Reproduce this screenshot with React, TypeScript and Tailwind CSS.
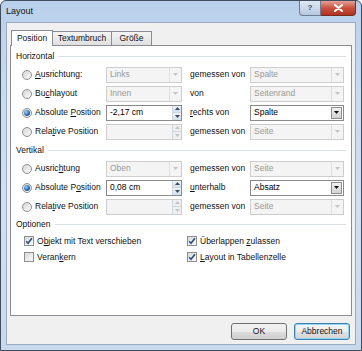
import React from "react";

function Acc({ text, at }: { text: string; at?: number }) {
  if (at === undefined) return <>{text}</>;
  return (
    <>
      {text.slice(0, at)}
      <span className="underline underline-offset-1">{text[at]}</span>
      {text.slice(at + 1)}
    </>
  );
}

const Tri = ({ color, up }: { color: string; up?: boolean }) => (
  <svg width="5" height="3" viewBox="0 0 5 3">
    <path d={up ? "M0 3h5L2.5 0z" : "M0 0h5L2.5 3z"} fill={color} />
  </svg>
);

const Radio = ({ on }: { on?: boolean }) => (
  <span className="w-[10px] h-[10px] rounded-full border border-[#8e8f8f] bg-gradient-to-br from-[#d6d6d6] to-[#fbfbfb] flex items-center justify-center shrink-0">
    {on && (
      <span className="w-[6px] h-[6px] rounded-full bg-[radial-gradient(circle_at_35%_35%,#9fd0f4,#1f62ad_60%,#0b3875)]" />
    )}
  </span>
);

const Check = ({ on }: { on?: boolean }) => (
  <span className="w-[10px] h-[10px] border border-[#8e8f8f] bg-gradient-to-br from-[#dadada] to-[#fafafa] flex items-center justify-center shrink-0">
    {on && (
      <svg width="8" height="8" viewBox="0 0 8 8">
        <path d="M1.2 4.2 3.1 6.3 6.9 1.2" stroke="#2f4f86" strokeWidth="1.6" fill="none" />
      </svg>
    )}
  </span>
);

function Combo({ value, disabled, wide }: { value: string; disabled?: boolean; wide?: boolean }) {
  return (
    <div
      className={
        (wide ? "w-[94px] " : "w-[76px] ") +
        (disabled
          ? "border-[#cdcdcd] bg-[#f4f4f4] text-[#999999] "
          : "border-[#8a8a8a] bg-white text-black ") +
        "h-[16px] border flex items-center shrink-0"
      }
    >
      <span className="flex-1 pl-[3px] leading-none">{value}</span>
      {disabled ? (
        <span className="w-[12px] h-full border-l border-[#dedede] flex items-center justify-center">
          <Tri color="#c4c4c4" />
        </span>
      ) : (
        <span className="w-[11px] h-[12px] mr-[1px] border border-[#8e8f8f] bg-gradient-to-b from-[#f2f2f2] to-[#d2d2d2] flex items-center justify-center">
          <Tri color="#111" />
        </span>
      )}
    </div>
  );
}

function Spin({ value, disabled }: { value?: string; disabled?: boolean }) {
  return (
    <div
      className={
        (disabled ? "border-[#cdcdcd] bg-[#f4f4f4] " : "border-[#8a8a8a] bg-white ") +
        "w-[76px] h-[16px] border flex items-center shrink-0"
      }
    >
      <span className="flex-1 pl-[3px] leading-none text-black">{value}</span>
      <span className="w-[9px] h-full flex flex-col">
        <span
          className={
            (disabled ? "bg-[#efefef] " : "bg-gradient-to-b from-[#eef4fa] to-[#d3e0ee] ") +
            "flex-1 border-l border-b border-[#d0d6de] flex items-center justify-center"
          }
        >
          <Tri up color={disabled ? "#c4c4c4" : "#3b4a5c"} />
        </span>
        <span
          className={
            (disabled ? "bg-[#efefef] " : "bg-gradient-to-b from-[#eef4fa] to-[#d3e0ee] ") +
            "flex-1 border-l border-[#d0d6de] flex items-center justify-center"
          }
        >
          <Tri color={disabled ? "#c4c4c4" : "#3b4a5c"} />
        </span>
      </span>
    </div>
  );
}

function Header({ title, tall }: { title: string; tall?: boolean }) {
  return (
    <div className={(tall ? "h-[18px] " : "h-[17px] ") + "flex items-center pl-[5px] pr-[5px] gap-[4px]"}>
      <span>{title}</span>
      <span className="flex-1 h-px bg-[#d9e0e7]" />
    </div>
  );
}

interface RowProps {
  on?: boolean;
  label: string;
  acc?: number;
  left: React.ReactNode;
  mid: string;
  midAcc?: number;
  right: React.ReactNode;
}

function Row({ on, label, acc, left, mid, midAcc, right }: RowProps) {
  return (
    <div className="flex items-center h-[19px]">
      <div className="w-[95px] pl-[11px] flex items-center gap-[3px] shrink-0">
        <Radio on={on} />
        <span className="whitespace-nowrap">
          <Acc text={label} at={acc} />
        </span>
      </div>
      {left}
      <span className="w-[68px] pl-[8px] whitespace-nowrap shrink-0">
        <Acc text={mid} at={midAcc} />
      </span>
      {right}
    </div>
  );
}

function Opt({ on, label, acc }: { on?: boolean; label: string; acc: number }) {
  return (
    <div className="flex items-center gap-[3px]">
      <Check on={on} />
      <span className="whitespace-nowrap">
        <Acc text={label} at={acc} />
      </span>
    </div>
  );
}

export default function App() {
  return (
    <div className="w-[362px] h-[351px] flex flex-col rounded-t-[6px] border border-[#3f4d5e] bg-[linear-gradient(180deg,#b9d0ec_0%,#c8daef_25%,#d1e0f1_60%,#c9d9ec_100%)] font-['Liberation_Sans',Arial,sans-serif] text-[8.5px] text-[#111]">
      {/* title bar */}
      <div className="h-[21px] flex items-start shrink-0">
        <span className="pl-[5px] pt-[6px] text-[9px] leading-none">Layout</span>
        <div className="ml-auto mr-[5px] flex">
          <div className="w-[22px] h-[15px] rounded-bl-[4px] border border-t-0 border-[#6b7d94] bg-gradient-to-b from-[#dfe8f3] to-[#b7c9df] flex items-center justify-center text-[8px] font-bold text-[#3c4f66]">
            ?
          </div>
          <div className="w-[35px] h-[15px] rounded-br-[4px] border border-l-0 border-t-0 border-[#7a2a22] bg-gradient-to-b from-[#e6a196] via-[#c9503f] to-[#b1321f] flex items-center justify-center">
            <svg width="9" height="8" viewBox="0 0 9 8">
              <path d="M1 1l7 6M8 1L1 7" stroke="#fff" strokeWidth="2" strokeLinecap="round" />
            </svg>
          </div>
        </div>
      </div>

      {/* client area */}
      <div className="mx-[5px] mb-[5px] flex-1 border border-[#9aabc0] bg-[#f0f0f0] flex flex-col">
        <div className="mt-[6px] h-[16px] pl-[4px] flex items-end shrink-0">
          <div className="relative z-10 -mb-px w-[42px] h-[16px] border border-b-0 border-[#898c95] bg-white flex items-center justify-center">
            Position
          </div>
          <div className="w-[59px] h-[14px] border border-l-0 border-b-0 border-[#898c95] bg-gradient-to-b from-[#f4f4f4] to-[#e0e0e0] flex items-center justify-center">
            Textumbruch
          </div>
          <div className="w-[40px] h-[14px] border border-l-0 border-b-0 border-[#898c95] bg-gradient-to-b from-[#f4f4f4] to-[#e0e0e0] flex items-center justify-center">
            Größe
          </div>
        </div>

        <div className="mx-[3px] h-[271px] border border-[#898c95] bg-white flex flex-col shrink-0">
          <div className="mt-[1px]">
            <Header title="Horizontal" tall />
          </div>
          <Row
            label="Ausrichtung:"
            acc={0}
            left={<Combo value="Links" disabled />}
            mid="gemessen von"
            right={<Combo value="Spalte" disabled wide />}
          />
          <Row
            label="Buchlayout"
            acc={2}
            left={<Combo value="Innen" disabled />}
            mid="von"
            right={<Combo value="Seitenrand" disabled wide />}
          />
          <Row
            on
            label="Absolute Position"
            acc={9}
            left={<Spin value="-2,17 cm" />}
            mid="rechts von"
            midAcc={0}
            right={<Combo value="Spalte" wide />}
          />
          <Row
            label="Relative Position"
            acc={4}
            left={<Spin disabled />}
            mid="gemessen von"
            right={<Combo value="Seite" disabled wide />}
          />

          <Header title="Vertikal" tall />
          <Row
            label="Ausrichtung"
            acc={6}
            left={<Combo value="Oben" disabled />}
            mid="gemessen von"
            right={<Combo value="Seite" disabled wide />}
          />
          <Row
            on
            label="Absolute Position"
            acc={10}
            left={<Spin value="0,08 cm" />}
            mid="unterhalb"
            midAcc={0}
            right={<Combo value="Absatz" wide />}
          />
          <Row
            label="Relative Position"
            acc={4}
            left={<Spin disabled />}
            mid="gemessen von"
            right={<Combo value="Seite" disabled wide />}
          />

          <Header title="Optionen" />
          <div className="flex">
            <div className="w-[176px] pl-[13px] flex flex-col">
              <div className="h-[16px] flex items-center">
                <Opt on label="Objekt mit Text verschieben" acc={1} />
              </div>
              <div className="h-[16px] flex items-center">
                <Opt label="Verankern" acc={5} />
              </div>
            </div>
            <div className="flex flex-col">
              <div className="h-[16px] flex items-center">
                <Opt on label="Überlappen zulassen" acc={11} />
              </div>
              <div className="h-[16px] flex items-center">
                <Opt on label="Layout in Tabellenzelle" acc={0} />
              </div>
            </div>
          </div>
        </div>

        <div className="mt-[7px] pr-[5px] flex justify-end gap-[7px]">
          <button className="w-[56px] h-[17px] rounded-[3px] border border-[#707070] bg-[linear-gradient(180deg,#f2f2f2_0%,#ebebeb_50%,#dddddd_51%,#cfcfcf_100%)] text-[8.5px]">
            OK
          </button>
          <button className="w-[56px] h-[17px] rounded-[3px] border border-[#3c7fb1] shadow-[inset_0_0_0_1px_#8fd6f5] bg-[linear-gradient(180deg,#f4f4f4_0%,#ededed_50%,#e0e0e0_51%,#d4d4d4_100%)] text-[8.5px]">
            Abbrechen
          </button>
        </div>
      </div>
    </div>
  );
}
